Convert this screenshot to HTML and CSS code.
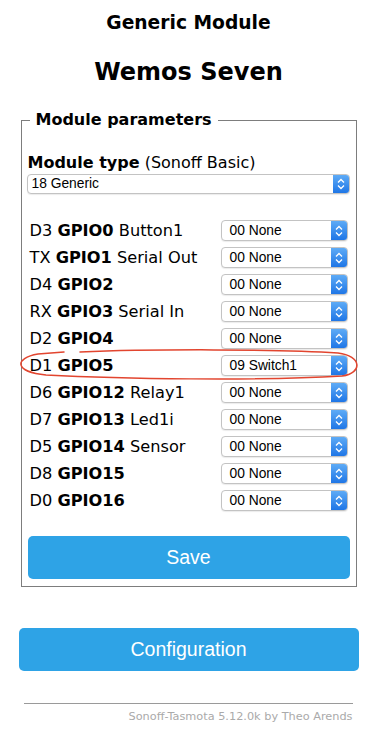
FILE: index.html
```html
<!DOCTYPE html>
<html lang="en">
<head>
    <meta charset="UTF-8">
    <meta name="viewport" content="width=device-width, initial-scale=1.0">
    <title>Generic Module - Wemos Seven</title>
    <link rel="stylesheet" href="styles.css">
</head>
<body>
<div class="page">
    <h3 class="title-small">Generic Module</h3>
    <h2 class="title-big">Wemos Seven</h2>

    <fieldset class="params">
        <legend>Module parameters</legend>

        <p class="module-type"><b>Module type</b> (Sonoff Basic)</p>
        <div class="sel sel-wide">
            <span class="sel-text">18 Generic</span>
            <span class="sel-arrow"><svg width="16" height="20" viewBox="0 0 16 20"><path d="M5 8.5 L8 5.5 L11 8.5 M5 11.5 L8 14.5 L11 11.5" fill="none" stroke="#fff" stroke-width="1.3"/></svg></span>
        </div>

        <div class="gpio-list">
            <div class="gpio-row">
                <span class="gpio-label">D3 <b>GPIO0</b> Button1</span>
                <div class="sel"><span class="sel-text">00 None</span><span class="sel-arrow"><svg width="16" height="20" viewBox="0 0 16 20"><path d="M5 8.5 L8 5.5 L11 8.5 M5 11.5 L8 14.5 L11 11.5" fill="none" stroke="#fff" stroke-width="1.3"/></svg></span></div>
            </div>
            <div class="gpio-row">
                <span class="gpio-label">TX <b>GPIO1</b> Serial Out</span>
                <div class="sel"><span class="sel-text">00 None</span><span class="sel-arrow"><svg width="16" height="20" viewBox="0 0 16 20"><path d="M5 8.5 L8 5.5 L11 8.5 M5 11.5 L8 14.5 L11 11.5" fill="none" stroke="#fff" stroke-width="1.3"/></svg></span></div>
            </div>
            <div class="gpio-row">
                <span class="gpio-label">D4 <b>GPIO2</b></span>
                <div class="sel"><span class="sel-text">00 None</span><span class="sel-arrow"><svg width="16" height="20" viewBox="0 0 16 20"><path d="M5 8.5 L8 5.5 L11 8.5 M5 11.5 L8 14.5 L11 11.5" fill="none" stroke="#fff" stroke-width="1.3"/></svg></span></div>
            </div>
            <div class="gpio-row">
                <span class="gpio-label">RX <b>GPIO3</b> Serial In</span>
                <div class="sel"><span class="sel-text">00 None</span><span class="sel-arrow"><svg width="16" height="20" viewBox="0 0 16 20"><path d="M5 8.5 L8 5.5 L11 8.5 M5 11.5 L8 14.5 L11 11.5" fill="none" stroke="#fff" stroke-width="1.3"/></svg></span></div>
            </div>
            <div class="gpio-row">
                <span class="gpio-label">D2 <b>GPIO4</b></span>
                <div class="sel"><span class="sel-text">00 None</span><span class="sel-arrow"><svg width="16" height="20" viewBox="0 0 16 20"><path d="M5 8.5 L8 5.5 L11 8.5 M5 11.5 L8 14.5 L11 11.5" fill="none" stroke="#fff" stroke-width="1.3"/></svg></span></div>
            </div>
            <div class="gpio-row">
                <span class="gpio-label">D1 <b>GPIO5</b></span>
                <div class="sel"><span class="sel-text">09 Switch1</span><span class="sel-arrow"><svg width="16" height="20" viewBox="0 0 16 20"><path d="M5 8.5 L8 5.5 L11 8.5 M5 11.5 L8 14.5 L11 11.5" fill="none" stroke="#fff" stroke-width="1.3"/></svg></span></div>
            </div>
            <div class="gpio-row">
                <span class="gpio-label">D6 <b>GPIO12</b> Relay1</span>
                <div class="sel"><span class="sel-text">00 None</span><span class="sel-arrow"><svg width="16" height="20" viewBox="0 0 16 20"><path d="M5 8.5 L8 5.5 L11 8.5 M5 11.5 L8 14.5 L11 11.5" fill="none" stroke="#fff" stroke-width="1.3"/></svg></span></div>
            </div>
            <div class="gpio-row">
                <span class="gpio-label">D7 <b>GPIO13</b> Led1i</span>
                <div class="sel"><span class="sel-text">00 None</span><span class="sel-arrow"><svg width="16" height="20" viewBox="0 0 16 20"><path d="M5 8.5 L8 5.5 L11 8.5 M5 11.5 L8 14.5 L11 11.5" fill="none" stroke="#fff" stroke-width="1.3"/></svg></span></div>
            </div>
            <div class="gpio-row">
                <span class="gpio-label">D5 <b>GPIO14</b> Sensor</span>
                <div class="sel"><span class="sel-text">00 None</span><span class="sel-arrow"><svg width="16" height="20" viewBox="0 0 16 20"><path d="M5 8.5 L8 5.5 L11 8.5 M5 11.5 L8 14.5 L11 11.5" fill="none" stroke="#fff" stroke-width="1.3"/></svg></span></div>
            </div>
            <div class="gpio-row">
                <span class="gpio-label">D8 <b>GPIO15</b></span>
                <div class="sel"><span class="sel-text">00 None</span><span class="sel-arrow"><svg width="16" height="20" viewBox="0 0 16 20"><path d="M5 8.5 L8 5.5 L11 8.5 M5 11.5 L8 14.5 L11 11.5" fill="none" stroke="#fff" stroke-width="1.3"/></svg></span></div>
            </div>
            <div class="gpio-row">
                <span class="gpio-label">D0 <b>GPIO16</b></span>
                <div class="sel"><span class="sel-text">00 None</span><span class="sel-arrow"><svg width="16" height="20" viewBox="0 0 16 20"><path d="M5 8.5 L8 5.5 L11 8.5 M5 11.5 L8 14.5 L11 11.5" fill="none" stroke="#fff" stroke-width="1.3"/></svg></span></div>
            </div>
        </div>

        <button class="btn btn-save">Save</button>
    </fieldset>

    <button class="btn btn-config">Configuration</button>

    <hr class="footer-line">
    <div class="footer">Sonoff-Tasmota 5.12.0k by Theo Arends</div>
</div>

<!-- hand drawn marker around the GPIO5 row -->
<svg class="marker" width="377" height="734" viewBox="0 0 377 734">
    <path d="M80 352 C150 349 280 349 338 353 C362 356 363 373 342 376 C260 381 120 379 46 375 C14 372 14 358 38 354 L64 352" fill="none" stroke="#e2452f" stroke-width="1.5" stroke-linecap="round"/>
</svg>
</body>
</html>
```

FILE: styles.css
```css
body {
    margin: 0;
    position: relative;
    font-family: "DejaVu Sans", Verdana, sans-serif;
    color: #000;
    background: #fff;
}

.page {
    width: 340px;
    margin: 0 auto;
}

.title-small {
    font-size: 18.7px;
    line-height: 22px;
    text-align: center;
    margin: 12px 0 0;
}

.title-big {
    font-size: 24px;
    line-height: 28px;
    text-align: center;
    margin: 24px 0 0;
}

.params {
    margin: 24px 3px 0 2px;
    padding: 0 6px 7px;
    border: 1px solid #7d7d7d;
}

.params legend {
    font-weight: bold;
    font-size: 16px;
    line-height: 20px;
    padding: 0 6px;
    margin-left: 2px;
}

.module-type {
    font-size: 16px;
    line-height: 20px;
    margin: 23px 0 1px;
}

.sel {
    display: flex;
    align-items: stretch;
    width: 127px;
    height: 21px;
    box-sizing: border-box;
    border: 1px solid #c3c3c3;
    border-radius: 4px;
    background: #fff;
    box-shadow: 0 1px 1px rgba(0, 0, 0, 0.08);
    font-family: "Liberation Sans", Arial, sans-serif;
    font-size: 13.8px;
    overflow: hidden;
}

.sel-wide {
    width: 323px;
    height: 20px;
    margin-left: -1px;
}

.sel-text {
    flex: 1;
    line-height: 19px;
    padding-left: 8px;
}

.sel-wide .sel-text {
    padding-left: 4px;
    line-height: 18px;
}

.sel-arrow {
    width: 16px;
    display: flex;
    align-items: center;
    justify-content: center;
    background: linear-gradient(#5eabf6, #1f76e6);
}

.gpio-list {
    margin-top: 23px;
}

.gpio-row {
    display: flex;
    align-items: center;
    height: 27px;
}

.gpio-label {
    width: 191px;
    padding-left: 2px;
    font-size: 16.2px;
    white-space: nowrap;
}

.btn {
    display: block;
    width: 100%;
    height: 43px;
    border: none;
    border-radius: 5px;
    background-color: #2ea3e6;
    color: #fff;
    font-family: "Liberation Sans", Arial, sans-serif;
    font-size: 19.5px;
    padding: 0;
}

.btn-save {
    width: 322px;
    margin-top: 22px;
}

.btn-config {
    margin-top: 41px;
}

.footer-line {
    margin: 32px 6px 0 5px;
    border: none;
    border-top: 1px solid #9a9a9a;
    height: 0;
}

.footer {
    text-align: right;
    font-size: 11.3px;
    line-height: 14px;
    color: #aaa;
    margin: 6px 6px 0 0;
}

.marker {
    position: absolute;
    top: 0;
    left: 0;
    pointer-events: none;
}
```
